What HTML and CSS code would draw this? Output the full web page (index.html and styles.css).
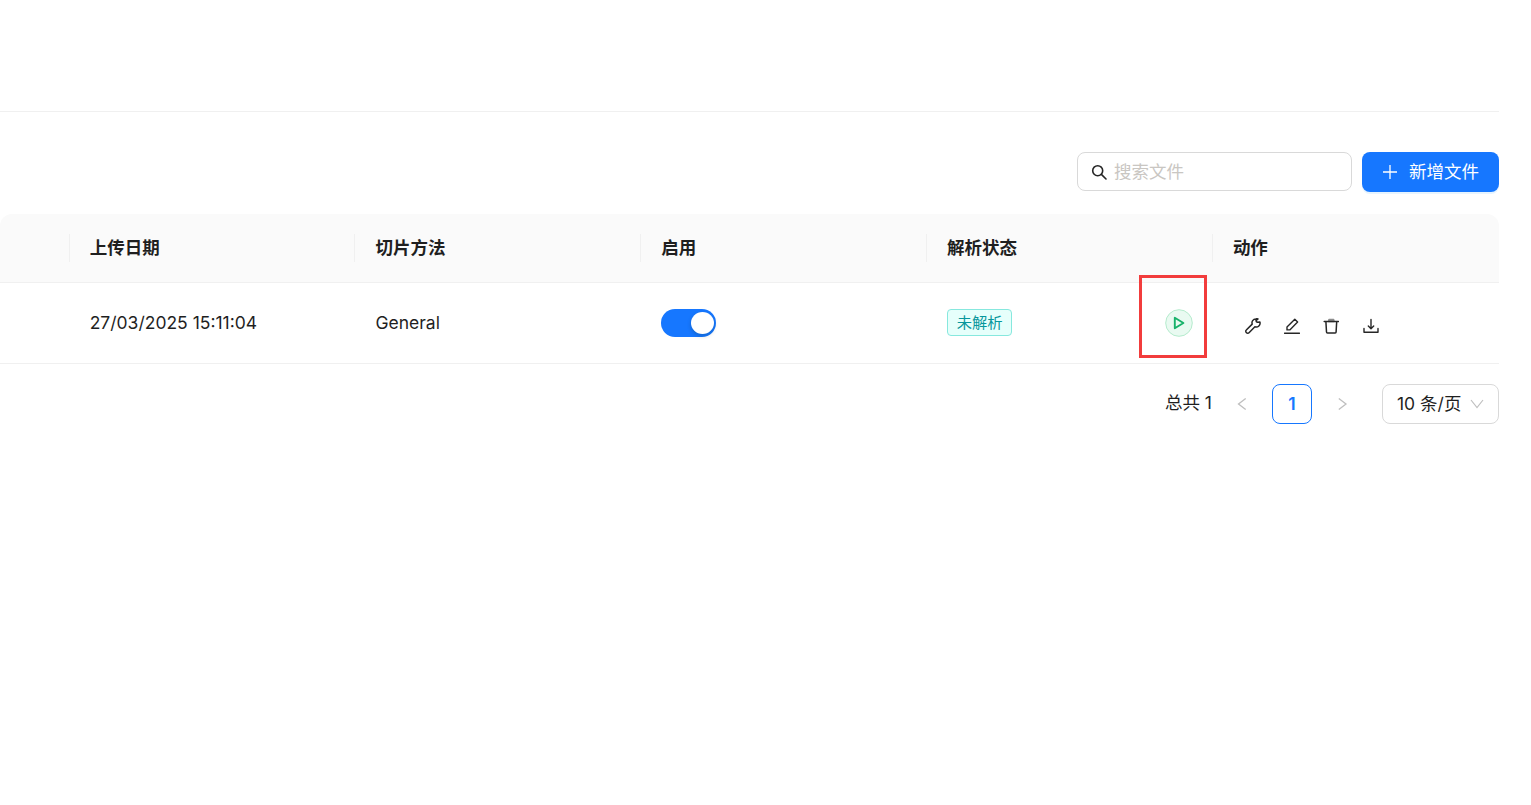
FILE: index.html
```html
<!DOCTYPE html>
<html lang="zh-CN">
<head>
<meta charset="utf-8">
<title>文件</title>
<link rel="stylesheet" href="styles.css">
</head>
<body>
<main class="page">
  <header class="topbar"></header>
  <div class="toolbar">
    <label class="search">
      <svg class="search-icon" viewBox="0 0 16 16" width="16" height="16" fill="none" stroke="#262626" stroke-width="1.6"><circle cx="6.7" cy="6.7" r="5"/><path d="M10.4 10.4 15 15" stroke-linecap="round"/></svg>
      <span class="placeholder">搜索文件</span>
    </label>
    <button class="add-btn">
      <svg viewBox="0 0 16 16" width="16" height="16" fill="none" stroke="#fff" stroke-width="1.3"><path d="M8 1v14M1 8h14"/></svg>
      <span>新增文件</span>
    </button>
  </div>
  <section class="table">
    <div class="row head">
      <div class="cell first"></div>
      <div class="cell">上传日期</div>
      <div class="cell">切片方法</div>
      <div class="cell">启用</div>
      <div class="cell">解析状态</div>
      <div class="cell last">动作</div>
    </div>
    <div class="row body">
      <div class="cell first"></div>
      <div class="cell">27/03/2025 15:11:04</div>
      <div class="cell">General</div>
      <div class="cell"><span class="switch"><span class="knob"></span></span></div>
      <div class="cell status">
        <span class="tag">未解析</span>
        <span class="run">
          <svg viewBox="0 0 28 28" width="28" height="28" fill="none"><circle cx="14" cy="14" r="13.3" fill="#e9faf1" stroke="#b5ebcd"/><path d="M9.800 8.700v10.600l8.600-5.300z" stroke="#17b26a" stroke-width="1.9" stroke-linejoin="round"/></svg>
        </span>
      </div>
      <div class="cell last actions">
        <svg viewBox="0 0 16 16" width="16" height="16" fill="none" stroke="#262626" stroke-width="1.5" stroke-linejoin="round"><path d="M10.800.9a3.900 3.900 0 0 0-3.600 5.200L1.300 12a1.700 1.700 0 0 0 0 2.500l.2.200a1.700 1.700 0 0 0 2.500 0l5.900-5.900a3.900 3.900 0 0 0 5-4.800L12.600 4.300 11.400 3.800 11 2.600 13 .9a3.900 3.900 0 0 0-2.200 0z"/></svg>
        <svg viewBox="0 0 16 16" width="16" height="16" fill="none" stroke="#262626" stroke-width="1.4" stroke-linejoin="round" stroke-linecap="round"><path d="M.5 15.300h15M3 11.900v-2.800L10.800 1.300l2.800 2.800-7.800 7.800z"/></svg>
        <svg viewBox="0 0 16 16" width="16" height="16" fill="none" stroke="#262626" stroke-width="1.5" stroke-linejoin="round" stroke-linecap="round"><path d="M5.500 3.500l.5-2h4.600l.5 2z" fill="#8c8c8c" stroke="#8c8c8c"/><path d="M1.200 3.500h14.200M2.900 3.500l.6 10.500a1 1 0 0 0 1 1h7.600a1 1 0 0 0 1-1l.6-10.500"/></svg>
        <svg viewBox="0 0 16 16" width="16" height="16" fill="none" stroke="#262626" stroke-width="1.4" stroke-linecap="round" stroke-linejoin="round"><path d="M8 1.500v9M5.300 8 8 10.700 10.700 8M1 10.500v3.800h14v-3.800"/></svg>
      </div>
    </div>
  </section>
  <nav class="pager">
    <span class="total">总共 1</span>
    <span class="arrow"><svg viewBox="0 0 12 12" width="12" height="12" fill="none" stroke="#bfbfbf" stroke-width="1.300"><path d="M9.700.5 2.500 6l7.200 5.500"/></svg></span>
    <span class="page-num">1</span>
    <span class="arrow"><svg viewBox="0 0 12 12" width="12" height="12" fill="none" stroke="#bfbfbf" stroke-width="1.300"><path d="M2.800.5 10 6l-7.200 5.500"/></svg></span>
    <span class="size"><span>10 条/页</span><svg viewBox="0 0 14 10" width="14" height="10" fill="none" stroke="#bfbfbf" stroke-width="1.200"><path d="M1 1 7 8.500 13 1"/></svg></span>
  </nav>
  <div class="highlight"></div>
</main>
</body>
</html>
```
FILE: styles.css
```css
* { box-sizing: border-box; }
html, body { margin: 0; height: 100%; background: #fff; }
body {
  font-family: Inter, "Noto Sans CJK SC", sans-serif;
  font-size: 17.5px;
  line-height: 24px;
  color: #1f1f1f;
  overflow: hidden;
}
.page { position: relative; width: 1499px; height: 805px; }
.topbar { height: 112px; border-bottom: 1px solid #f0f0f0; }
.toolbar {
  display: flex;
  justify-content: flex-end;
  align-items: flex-start;
  gap: 10px;
  padding-top: 40px;
  height: 102px;
}
.search {
  display: flex;
  align-items: center;
  gap: 7px;
  width: 275px;
  height: 39px;
  padding: 0 13px;
  border: 1px solid #d9d9d9;
  border-radius: 8px;
}
.placeholder { color: #c9c6c2; }
.add-btn {
  display: flex;
  align-items: center;
  gap: 11px;
  width: 137px;
  height: 40px;
  padding: 0 0 0 20px;
  border: 0;
  border-radius: 8px;
  background: #1677ff;
  color: #fff;
  font: inherit;
  box-shadow: 0 2px 0 rgba(5, 145, 255, 0.1);
}
.table { display: flex; flex-direction: column; }
.row {
  display: grid;
  grid-template-columns: 69.7px 285.8px 285.8px 285.8px 285.8px 286.1px;
  align-items: center;
}
.head {
  height: 69px;
  padding-bottom: 1px;
  background: #fafafa;
  border-bottom: 1px solid #f0f0f0;
  border-radius: 12px 12px 0 0;
  font-weight: 700;
}
.head .cell { position: relative; }
.head .cell:not(.first)::before {
  content: "";
  position: absolute;
  left: -1px;
  top: 50%;
  width: 1px;
  height: 28px;
  margin-top: -14px;
  background: #f0f0f0;
}
.body { height: 81px; border-bottom: 1px solid #f0f0f0; }
.cell { padding-left: 20px; }
.cell.first { padding: 0; }
.switch {
  display: block;
  width: 55px;
  height: 28px;
  padding: 3px;
  border-radius: 14px;
  background: #1677ff;
}
.knob {
  display: block;
  width: 23px;
  height: 22px;
  margin-left: 27px;
  border-radius: 50%;
  background: #fff;
  box-shadow: 0 2px 4px rgba(0, 35, 11, 0.2);
}
.status { display: flex; align-items: center; justify-content: space-between; padding-right: 19.5px; }
.tag {
  display: block;
  width: 65px;
  height: 27px;
  margin-top: -1px;
  line-height: 25px;
  text-align: center;
  font-size: 15.3px;
  color: #08979c;
  background: #e6fffb;
  border: 1px solid #87e8de;
  border-radius: 4px;
}
.run { display: block; height: 28px; margin-top: -1px; }
.run svg { display: block; }
.actions { display: flex; align-items: center; gap: 23.3px; padding-left: 32px; padding-top: 6px; }
.pager {
  display: flex;
  justify-content: flex-end;
  align-items: center;
  height: 40px;
  margin-top: 20px;
}
.total { margin-right: 10px; margin-top: -2px; }
.arrow { width: 40px; height: 40px; display: flex; align-items: center; justify-content: center; }
.page-num {
  width: 40px;
  height: 40px;
  margin: 0 10px;
  line-height: 38px;
  text-align: center;
  font-weight: 600;
  color: #1677ff;
  border: 1px solid #1677ff;
  border-radius: 8px;
}
.size {
  display: flex;
  align-items: center;
  gap: 9px;
  width: 117px;
  height: 40px;
  margin-left: 20px;
  padding-left: 14px;
  border: 1px solid #d9d9d9;
  border-radius: 8px;
}
.highlight {
  position: absolute;
  left: 1139px;
  top: 275px;
  width: 68px;
  height: 83px;
  border: 3px solid #f23c3c;
}
```
